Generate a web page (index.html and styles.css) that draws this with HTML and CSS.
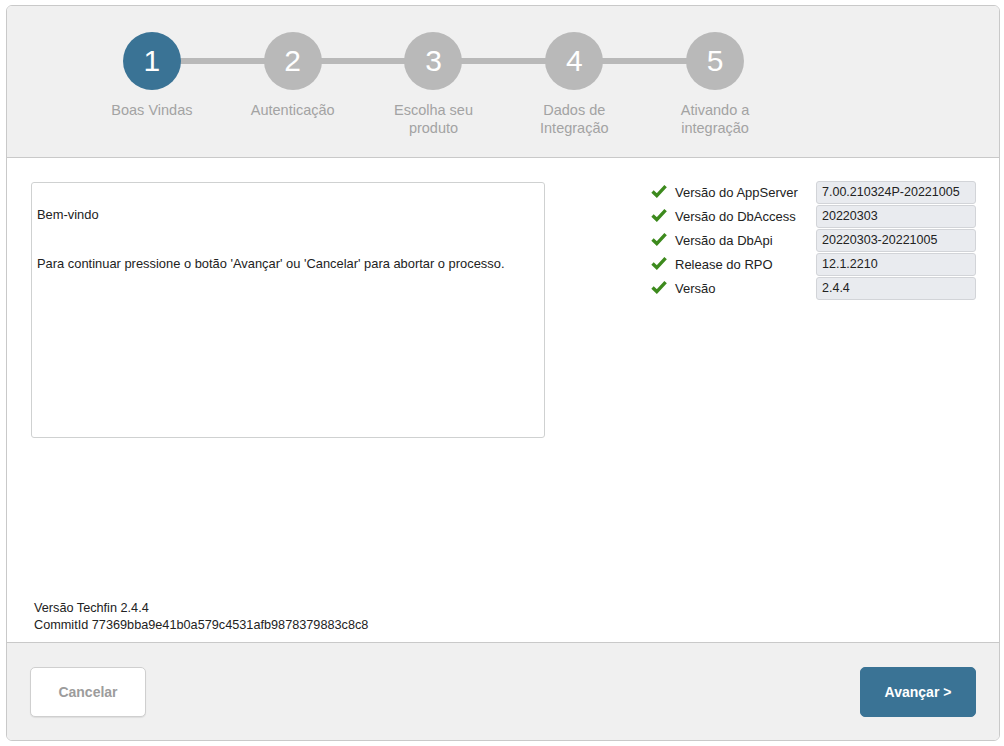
FILE: index.html
```html
<!DOCTYPE html>
<html lang="pt-BR">
<head>
    <meta charset="UTF-8">
    <meta name="viewport" content="width=device-width, initial-scale=1.0">
    <title>Assistente de Integração</title>
    <link rel="stylesheet" href="styles.css">
</head>
<body>

<div class="wizard">
    <header class="wizard-header">
        <ol class="steps">
            <li class="step active"><span class="step-num">1</span><span class="step-label">Boas Vindas</span></li>
            <li class="step"><span class="step-num">2</span><span class="step-label">Autenticação</span></li>
            <li class="step"><span class="step-num">3</span><span class="step-label">Escolha seu produto</span></li>
            <li class="step"><span class="step-num">4</span><span class="step-label">Dados de Integração</span></li>
            <li class="step"><span class="step-num">5</span><span class="step-label">Ativando a integração</span></li>
        </ol>
    </header>

    <main class="wizard-body">
        <div class="content-row">
            <div class="welcome-box">
                <p>Bem-vindo</p>
                <p class="gap">Para continuar pressione o botão 'Avançar' ou 'Cancelar' para abortar o processo.</p>
            </div>

            <div class="info-list">
                <div class="info-row">
                    <svg class="check" viewBox="0 0 16 14"><path d="M1.5 7.5 L5.8 11.6 L14.6 2.2" /></svg>
                    <span class="info-label">Versão do AppServer</span>
                    <span class="info-value">7.00.210324P-20221005</span>
                </div>
                <div class="info-row">
                    <svg class="check" viewBox="0 0 16 14"><path d="M1.5 7.5 L5.8 11.6 L14.6 2.2" /></svg>
                    <span class="info-label">Versão do DbAccess</span>
                    <span class="info-value">20220303</span>
                </div>
                <div class="info-row">
                    <svg class="check" viewBox="0 0 16 14"><path d="M1.5 7.5 L5.8 11.6 L14.6 2.2" /></svg>
                    <span class="info-label">Versão da DbApi</span>
                    <span class="info-value">20220303-20221005</span>
                </div>
                <div class="info-row">
                    <svg class="check" viewBox="0 0 16 14"><path d="M1.5 7.5 L5.8 11.6 L14.6 2.2" /></svg>
                    <span class="info-label">Release do RPO</span>
                    <span class="info-value">12.1.2210</span>
                </div>
                <div class="info-row">
                    <svg class="check" viewBox="0 0 16 14"><path d="M1.5 7.5 L5.8 11.6 L14.6 2.2" /></svg>
                    <span class="info-label">Versão</span>
                    <span class="info-value">2.4.4</span>
                </div>
            </div>
        </div>

        <div class="build-info">
            <div>Versão Techfin 2.4.4</div>
            <div>CommitId 77369bba9e41b0a579c4531afb9878379883c8c8</div>
        </div>
    </main>

    <footer class="wizard-footer">
        <button class="btn btn-cancel" type="button">Cancelar</button>
        <button class="btn btn-next" type="button">Avançar &gt;</button>
    </footer>
</div>

</body>
</html>
```

FILE: styles.css
```css
body {
    margin: 0;
    padding: 0;
    background-color: #fff;
    font-family: "Liberation Sans", Arial, sans-serif;
    color: #222;
}
.wizard {
    margin: 5px 0 0 6px;
    width: 992px;
    height: 734px;
    border: 1px solid #c9c9c9;
    border-radius: 6px;
    overflow: hidden;
    display: flex;
    flex-direction: column;
}

/* steps */
.wizard-header {
    background-color: #f0f0f0;
    height: 151px;
    border-bottom: 1px solid #c9c9c9;
}
.steps {
    list-style: none;
    margin: 0;
    padding: 26px 0 0 74.5px;
    display: flex;
}
.step {
    width: 140.8px;
    position: relative;
    display: flex;
    flex-direction: column;
    align-items: center;
}
.step:not(:last-child)::after {
    content: "";
    position: absolute;
    left: 50%;
    top: 26px;
    width: 100%;
    height: 6px;
    background-color: #b9b9b9;
}
.step-num {
    position: relative;
    z-index: 1;
    width: 58px;
    height: 58px;
    border-radius: 50%;
    background-color: #b9b9b9;
    color: #fff;
    font-size: 30px;
    line-height: 58px;
    text-align: center;
}
.step.active .step-num {
    background-color: #3a7395;
}
.step-label {
    margin-top: 11px;
    width: 100px;
    text-align: center;
    font-size: 14.5px;
    line-height: 18px;
    color: #a3a3a3;
}

/* body */
.wizard-body {
    border-bottom: 1px solid #c9c9c9;
    padding: 24px 23px 8px 24px;
    box-sizing: border-box;
    height: 485px;
    display: flex;
    flex-direction: column;
    justify-content: space-between;
}
.content-row {
    display: flex;
    justify-content: space-between;
    align-items: flex-start;
}
.welcome-box {
    width: 514px;
    height: 256px;
    box-sizing: border-box;
    border: 1px solid #cfd1d1;
    border-radius: 3px;
    padding: 24px 5px;
    font-size: 12.9px;
    line-height: 15px;
}
.welcome-box p {
    margin: 0;
}
.welcome-box .gap {
    margin-top: 34px;
}
.info-list {
    margin-top: -1px;
    display: flex;
    flex-direction: column;
    gap: 1px;
}
.info-row {
    display: flex;
    align-items: center;
    height: 23px;
}
.check {
    width: 16px;
    height: 14px;
    margin-right: 8px;
    margin-top: -3px;
}
.check path {
    fill: none;
    stroke: #3d8a1d;
    stroke-width: 3.4;
    stroke-linejoin: miter;
}
.info-label {
    width: 141px;
    font-size: 13px;
}
.info-value {
    width: 160px;
    height: 23px;
    box-sizing: border-box;
    border: 1px solid #d2d4d8;
    border-radius: 3px;
    background-color: #e9ebef;
    padding: 0 5px;
    font-size: 12.5px;
    line-height: 21px;
}
.build-info {
    padding-left: 3px;
    font-size: 12.7px;
    line-height: 17px;
}

/* footer */
.wizard-footer {
    flex: 1;
    background-color: #f0f0f0;
    display: flex;
    justify-content: space-between;
    align-items: flex-start;
    padding: 24px 23px 0 23px;
}
.btn {
    width: 116px;
    height: 50px;
    border-radius: 5px;
    font-family: "Liberation Sans", Arial, sans-serif;
    font-size: 14px;
    font-weight: bold;
    cursor: pointer;
}
.btn-cancel {
    background-color: #fff;
    color: #9c9c9c;
    border: 1px solid #cfcfcf;
    box-shadow: 0 1px 1px rgba(0, 0, 0, 0.08);
}
.btn-next {
    background-color: #3a7395;
    color: #fff;
    border: 1px solid #3a7395;
}
```
